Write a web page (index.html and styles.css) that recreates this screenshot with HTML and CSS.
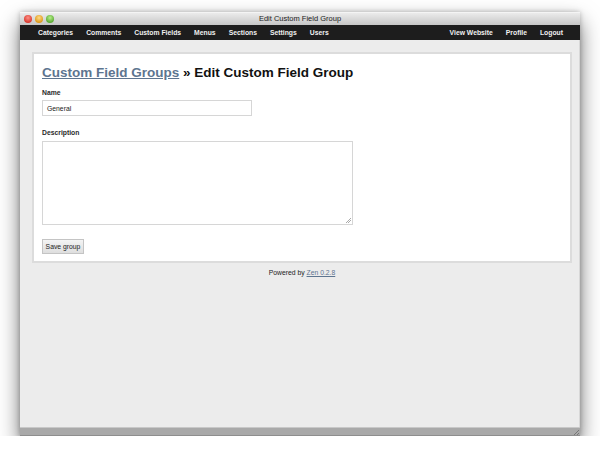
FILE: index.html
```html
<!DOCTYPE html>
<html>
<head>
<meta charset="utf-8">
<title>Edit Custom Field Group</title>
<link rel="stylesheet" href="styles.css">
</head>
<body>
<div class="window">
  <div class="titlebar">
    <div class="lights">
      <span class="light red"></span>
      <span class="light yellow"></span>
      <span class="light green"></span>
    </div>
    <div class="title">Edit Custom Field Group</div>
  </div>
  <div class="nav">
    <ul class="menu">
      <li>Categories</li>
      <li>Comments</li>
      <li>Custom Fields</li>
      <li>Menus</li>
      <li>Sections</li>
      <li>Settings</li>
      <li>Users</li>
    </ul>
    <ul class="menu">
      <li>View Website</li>
      <li>Profile</li>
      <li>Logout</li>
    </ul>
  </div>
  <div class="content">
    <div class="box">
      <h1 class="heading"><a href="#" class="link">Custom Field Groups</a> » Edit Custom Field Group</h1>
      <div class="field">
        <label class="label">Name</label>
        <div class="input">General</div>
      </div>
      <div class="field field-desc">
        <label class="label">Description</label>
        <div class="textarea"><span class="grip"></span></div>
      </div>
      <div class="button">Save group</div>
    </div>
    <p class="footer">Powered by <a href="#" class="flink">Zen 0.2.8</a></p>
  </div>
  <div class="statusbar"><span class="resize"></span></div>
</div>
</body>
</html>
```

FILE: styles.css
```css
html, body {
  margin: 0;
  padding: 0;
  background: #ffffff;
  font-family: "Liberation Sans", Arial, sans-serif;
}
body {
  padding-top: 12px;
}
.window {
  width: 560px;
  height: 424px;
  margin: 0 20px;
  display: flex;
  flex-direction: column;
  box-shadow: 0 10px 20px rgba(0,0,0,0.55), 0 0 5px rgba(0,0,0,0.25);
}
.titlebar {
  height: 13px;
  background: linear-gradient(#ebebeb, #c6c6c6);
  display: flex;
  align-items: center;
  position: relative;
  border-top: 1px solid #f4f4f4;
  box-sizing: border-box;
}
.lights {
  display: flex;
  gap: 3px;
  padding-left: 4px;
}
.light {
  width: 8px;
  height: 8px;
  border-radius: 50%;
  display: block;
}
.red { background: radial-gradient(circle at 50% 35%, #ff8f86, #d83a30 70%); }
.yellow { background: radial-gradient(circle at 50% 35%, #ffdb86, #de9a1c 70%); }
.green { background: radial-gradient(circle at 50% 35%, #b6f08a, #5cab35 70%); }
.title {
  position: absolute;
  left: 0;
  right: 0;
  text-align: center;
  font-size: 7.5px;
  color: #222;
  top: 1px;
}
.nav {
  height: 15px;
  background: #1d1d1d;
  display: flex;
  justify-content: space-between;
  align-items: center;
  padding: 0 17px 0 18px;
}
.menu {
  list-style: none;
  margin: 0;
  padding: 0;
  display: flex;
  gap: 13px;
}
.menu li {
  color: #f0f0f0;
  font-weight: bold;
  font-size: 6.8px;
}
.content {
  flex: 1;
  background: #ececec;
  padding: 12px 7px 0 12px;
  border-right: 1px solid #d8d8d8;
}
.box {
  background: #fff;
  border: 2px solid #dcdcdc;
  padding: 10px 8px 7px 8px;
}
.heading {
  margin: 0 0 8px;
  font-size: 13.5px;
  font-weight: bold;
  color: #111;
  line-height: 17px;
}
.link {
  color: #5d7590;
}
.field {
  display: flex;
  flex-direction: column;
  gap: 4px;
  margin-bottom: 13px;
}
.field-desc {
  gap: 5px;
  margin-bottom: 14px;
}
.label {
  font-size: 6.8px;
  color: #2a2a2a;
  font-weight: bold;
}
.input {
  width: 210px;
  height: 16px;
  box-sizing: border-box;
  border: 1px solid #d6d6d6;
  font-size: 6.8px;
  color: #222;
  padding: 0 4px;
  display: flex;
  align-items: center;
}
.textarea {
  width: 311px;
  height: 84px;
  box-sizing: border-box;
  border: 1px solid #d6d6d6;
  position: relative;
}
.grip {
  position: absolute;
  right: 1px;
  bottom: 1px;
  width: 5px;
  height: 5px;
  background: linear-gradient(135deg, transparent 45%, #aaa 45%, #aaa 55%, transparent 55%, transparent 70%, #aaa 70%, #aaa 80%, transparent 80%);
}
.button {
  display: flex;
  align-items: center;
  justify-content: center;
  width: 42px;
  height: 15px;
  box-sizing: border-box;
  border: 1px solid #c4c4c4;
  background: linear-gradient(#f4f4f4, #dedede);
  font-size: 6.8px;
  color: #222;
}
.footer {
  text-align: center;
  font-size: 6.8px;
  color: #222;
  margin: 6px 0 0;
}
.flink {
  color: #5d7590;
}
.statusbar {
  height: 9px;
  background: #a9a9a9;
  border-top: 1px solid #c8c8c8;
  border-bottom: 1px solid #8e8e8e;
  box-sizing: border-box;
  position: relative;
}
.resize {
  position: absolute;
  right: 1px;
  bottom: 0;
  width: 5px;
  height: 5px;
  background: linear-gradient(135deg, transparent 45%, #777 45%, #777 55%, transparent 55%, transparent 70%, #777 70%, #777 80%, transparent 80%);
}
```
